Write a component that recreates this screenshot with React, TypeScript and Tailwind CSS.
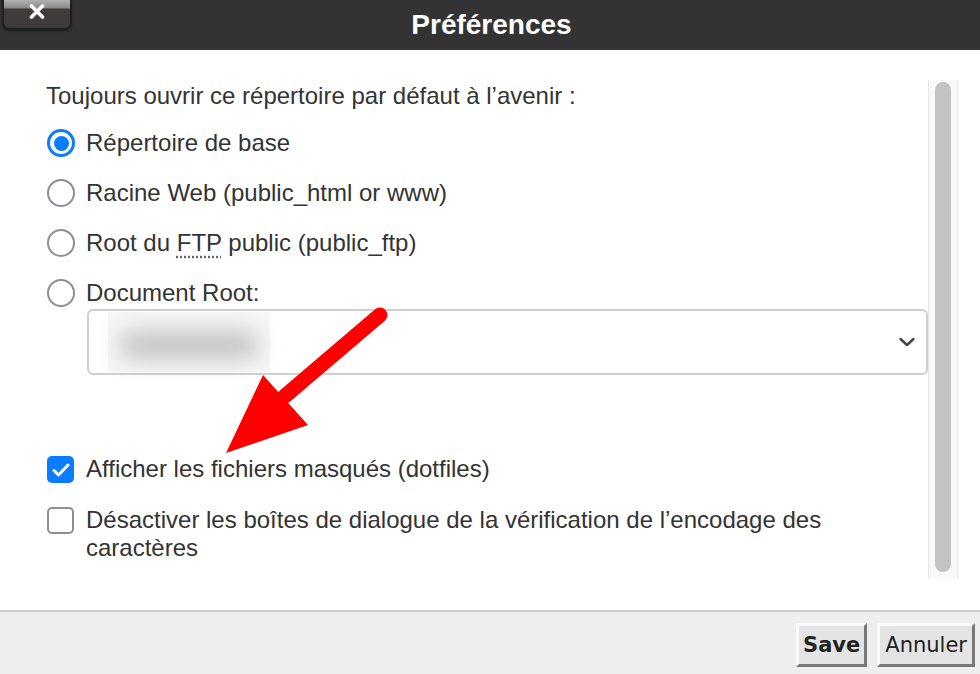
import React from "react";

function Radio({ checked, children }: { checked?: boolean; children: React.ReactNode }) {
  return (
    <label className="flex h-[28px] items-center">
      <span
        className={
          checked
            ? "ml-[1px] flex h-[28px] w-[28px] items-center justify-center rounded-full border-[3px] border-[#0a7cff] bg-white"
            : "ml-[1px] h-[28px] w-[28px] rounded-full border-2 border-[#8f8d99] bg-white"
        }
      >
        {checked && <span className="h-[15px] w-[15px] rounded-full bg-[#0a7cff]" />}
      </span>
      <span className="ml-[11px]">{children}</span>
    </label>
  );
}

function Checkbox({ checked, children }: { checked?: boolean; children: React.ReactNode }) {
  return (
    <label className="flex items-start">
      <span
        className={
          checked
            ? "mt-[1px] ml-[1px] flex h-[27px] w-[27px] shrink-0 items-center justify-center rounded-[5px] bg-[#0a7cff]"
            : "mt-[1px] ml-[1px] h-[27px] w-[27px] shrink-0 rounded-[5px] border-2 border-[#8f8d99] bg-white"
        }
      >
        {checked && (
          <svg width="18" height="14" viewBox="0 0 18 14">
            <polyline
              points="2,7.5 6.5,12 16,2"
              fill="none"
              stroke="white"
              strokeWidth="3"
              strokeLinecap="round"
              strokeLinejoin="round"
            />
          </svg>
        )}
      </span>
      <span className="ml-[12px] max-w-[780px]">{children}</span>
    </label>
  );
}

export default function App() {
  return (
    <div className="relative h-[674px] w-[980px] overflow-hidden bg-white font-['Liberation_Sans',Arial,sans-serif] text-[#333]">
      {/* header */}
      <div className="relative flex h-[50px] items-center justify-center bg-[#333]">
        <button className="absolute left-[2px] top-[-6px] flex h-[36px] w-[70px] items-end justify-center rounded-b-[7px] border-2 border-[#1f1f1f] bg-[linear-gradient(to_bottom,#c4c4c4_0%,#8a8a8a_38%,#403b3b_40%,#403b3b_100%)] pb-[9px] shadow-[0_1px_2px_rgba(0,0,0,0.5)]">
          <svg width="16" height="15" viewBox="0 0 16 15">
            <path d="M2.5 2 L13.5 13 M13.5 2 L2.5 13" stroke="white" strokeWidth="3.6" strokeLinecap="round" />
          </svg>
        </button>
        <h1 className="ml-[3px] text-[28px] font-bold text-white">Préférences</h1>
      </div>

      {/* body */}
      <div className="flex h-[560px]">
        <div className="flex w-[928px] flex-col pl-[46px] pt-[32px] text-[24px] leading-[28px]">
          <p>Toujours ouvrir ce répertoire par défaut à l’avenir :</p>
          <div className="mt-[19px] flex flex-col gap-[22px]">
            <Radio checked>Répertoire de base</Radio>
            <Radio>Racine Web (public_html or www)</Radio>
            <Radio>
              Root du <span className="underline decoration-dotted decoration-[#666] underline-offset-[5px]">FTP</span>{" "}
              public (public_ftp)
            </Radio>
            <Radio>Document Root:</Radio>
          </div>
          <div className="ml-[41px] mt-[2px] flex h-[66px] items-center rounded-[6px] border-2 border-[#cfcfcf] bg-white pr-[10px]">
            <div className="ml-[19px] flex h-[60px] w-[162px] items-center justify-center bg-[#f7f7f7]">
              <div className="mt-[6px] h-[26px] w-[140px] rounded-full bg-[#bdbdbd] blur-md" />
            </div>
            <div className="flex-1" />
            <svg width="18" height="12" viewBox="0 0 18 12">
              <polyline
                points="2.5,3 9,9 15.5,3"
                fill="none"
                stroke="#444"
                strokeWidth="2.4"
                strokeLinecap="round"
                strokeLinejoin="round"
              />
            </svg>
          </div>
          <div className="mt-[80px]">
            <Checkbox checked>Afficher les fichiers masqués (dotfiles)</Checkbox>
          </div>
          <div className="mt-[23px]">
            <Checkbox>Désactiver les boîtes de dialogue de la vérification de l’encodage des caractères</Checkbox>
          </div>
        </div>
        <div className="mt-[30px] flex h-[499px] w-[30px] justify-center border-x border-[#e6e6e6] bg-[#f9f9f9] pt-[2px]">
          <div className="h-[490px] w-[16px] rounded-full bg-[#c3c3c3]" />
        </div>
      </div>

      {/* footer */}
      <div className="flex h-[64px] items-start justify-end gap-[10px] border-t-2 border-[#cccccc] bg-[#eeeeee] pr-[5px] pt-[11px] font-['DejaVu_Sans',Verdana,sans-serif] text-[21px] text-[#222]">
        <button className="h-[44px] border-[3px] border-b-[#777] border-l-[#fafafa] border-r-[#777] border-t-[#fafafa] bg-[#e4e4e4] px-[4px] pt-[2px] font-bold">
          Save
        </button>
        <button className="h-[44px] border-[3px] border-b-[#777] border-l-[#fafafa] border-r-[#777] border-t-[#fafafa] bg-[#e4e4e4] px-[5px] pt-[2px]">
          Annuler
        </button>
      </div>

      {/* annotation arrow */}
      <svg className="pointer-events-none absolute left-0 top-0" width="980" height="674" viewBox="0 0 980 674">
        <line x1="380" y1="315" x2="285" y2="396" stroke="#ff0000" strokeWidth="15" strokeLinecap="round" />
        <polygon points="263,375 308,425 226,453" fill="#ff0000" />
      </svg>
    </div>
  );
}
